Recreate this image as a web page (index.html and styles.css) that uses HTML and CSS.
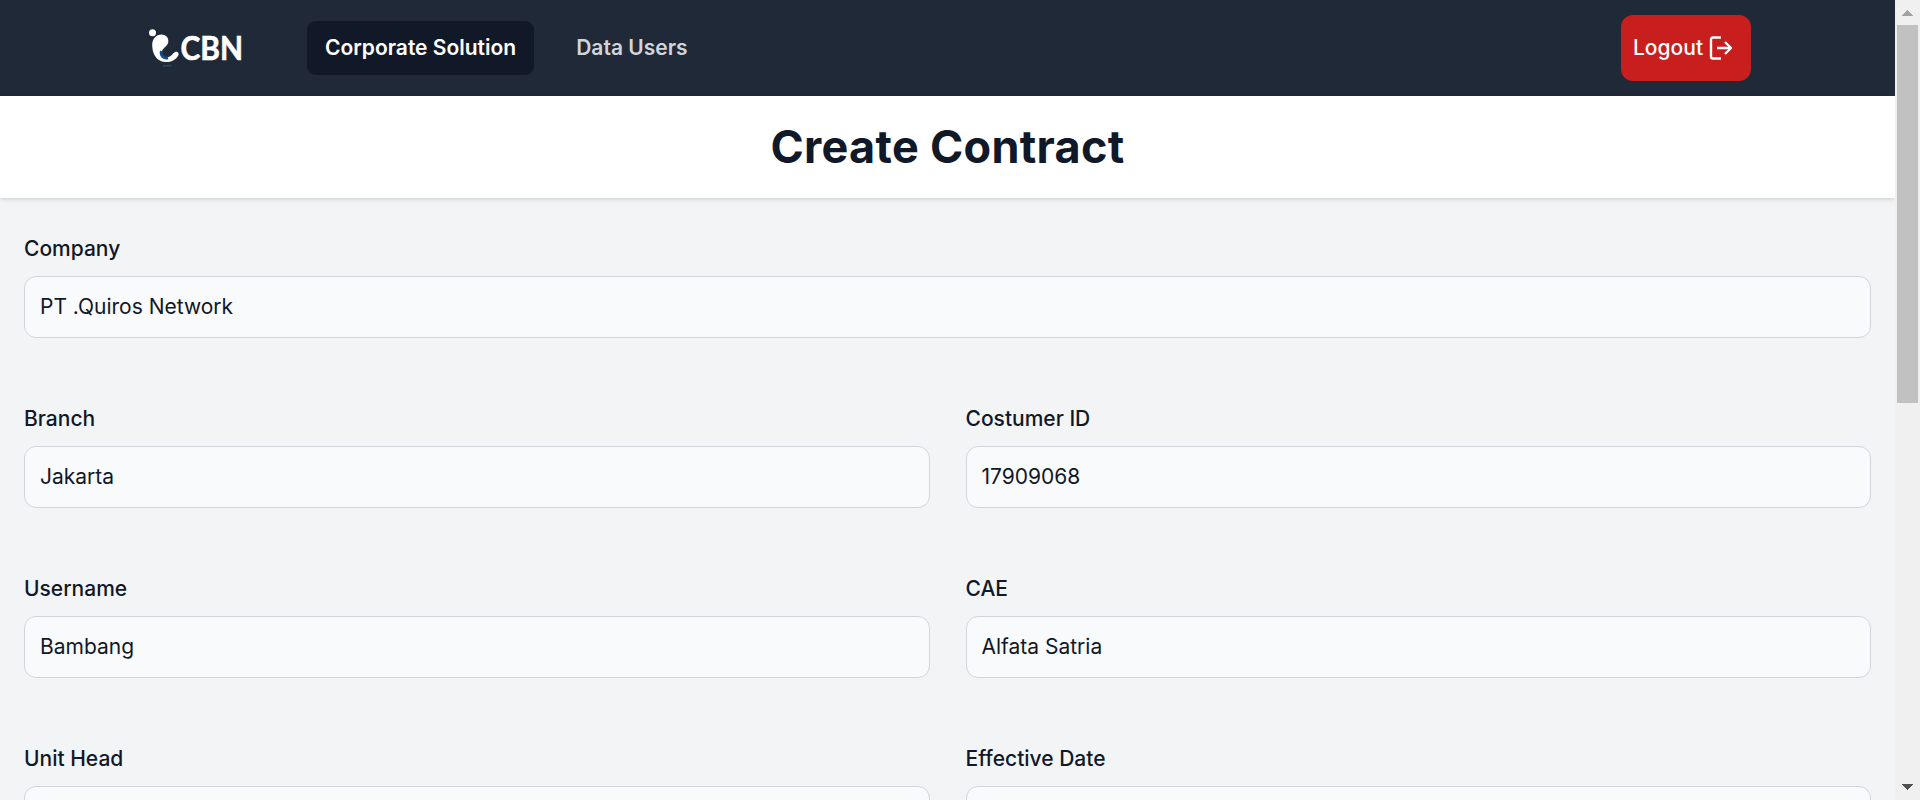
FILE: index.html
```html
<!DOCTYPE html>
<html lang="en">
<head>
<meta charset="utf-8">
<title>Create Contract</title>
<link rel="stylesheet" href="styles.css">
</head>
<body>
<div class="page">
  <nav class="navbar">
    <svg class="logo" viewBox="0 0 98 42" width="98" height="42">
      <circle cx="5.500" cy="6.800" r="3.500" fill="#fff"/>
      <path d="M14.500 8.600C18.500 8.600 21.800 11.500 21.300 16C20.800 20 15.500 22 14.500 26.500C14 30 16.500 32 20.500 31.300C24.500 30.500 25.500 27.500 28 26C30.500 24.800 32.500 27 31.300 29.500C28.500 34.500 23 36.500 18 36C9.500 35.300 5.200 28 5.200 19C5.200 13 9 8.600 14.500 8.600Z" fill="#fff"/>
      <path d="M14.300 25C13.300 30 17 32.800 21 31.800" fill="none" stroke="#174a83" stroke-width="2.800"/>
      <path d="M16 39.800H24.500" stroke="#2c4968" stroke-width="1.500"/>
      <text class="logo-text" x="33.500" y="33.500" textLength="62.500" lengthAdjust="spacingAndGlyphs">CBN</text>
    </svg>
    <div class="links">
      <a class="link active">Corporate Solution</a>
      <a class="link">Data Users</a>
    </div>
    <button class="logout">
      <span>Logout</span>
      <svg width="24" height="26" viewBox="0 0 24 26" fill="none" stroke="#fff" stroke-width="2.400" stroke-linejoin="round">
        <path d="M12 2.500H4Q2 2.500 2 4.500V21.500Q2 23.500 4 23.500H12"/>
        <path d="M8 13H22.500M16 7L22 13L16 19"/>
      </svg>
    </button>
  </nav>
  <header class="header"><h1>Create Contract</h1></header>
  <form class="form">
    <div class="field wide"><label>Company</label><input value="PT .Quiros Network"></div>
    <div class="field"><label>Branch</label><input value="Jakarta"></div>
    <div class="field"><label>Costumer ID</label><input value="17909068"></div>
    <div class="field"><label>Username</label><input value="Bambang"></div>
    <div class="field"><label>CAE</label><input value="Alfata Satria"></div>
    <div class="field"><label>Unit Head</label><input></div>
    <div class="field"><label>Effective Date</label><input></div>
  </form>
</div>
<div class="scrollbar">
  <svg class="arrow" width="25" height="25" viewBox="0 0 25 25" shape-rendering="crispEdges"><path d="M7 16L12.500 10L18 16Z" fill="#a3a3a3"/></svg>
  <div class="thumb"></div>
  <svg class="arrow" width="25" height="25" viewBox="0 0 25 25" shape-rendering="crispEdges"><path d="M7 9L12.500 15L18 9Z" fill="#505050"/></svg>
</div>
</body>
</html>
```
FILE: styles.css
```css
* { box-sizing: border-box; }
html { height: 100%; overflow: hidden; }
body {
  margin: 0;
  height: 800px;
  overflow: hidden;
  display: flex;
  font-family: Inter, "Liberation Sans", sans-serif;
  color: #111827;
  background: #f3f4f6;
}
.page { flex: 1; min-width: 0; height: 800px; overflow: hidden; }
.navbar {
  height: 96px;
  padding: 0 144px 0 147px;
  display: flex;
  align-items: center;
  background: #1f2937;
}
.logo { flex: none; margin-bottom: 3px; overflow: visible; }
.logo-text { font: 700 33px Lato, sans-serif; fill: #fff; stroke: #fff; stroke-width: .6px; }
.links { display: flex; gap: 24px; margin-left: 62px; flex: 1; }
.link {
  padding: 12px 18px;
  border-radius: 9px;
  font-size: 21px;
  line-height: 30px;
  font-weight: 600;
  color: #d1d5db;
}
.link.active { background: #111827; color: #fff; }
.logout {
  width: 130px;
  height: 66px;
  padding: 0 0 0 12px;
  border: 0;
  border-radius: 12px;
  background: #c81e1e;
  color: #fff;
  font: 500 21px/30px Inter, sans-serif;
  display: flex;
  align-items: center;
  gap: 6px;
}
.header {
  position: relative;
  height: 102px;
  padding: 24px;
  background: #fff;
  box-shadow: 0 1.5px 4.5px rgba(0,0,0,.1), 0 1.5px 3px -1.5px rgba(0,0,0,.1);
  text-align: center;
}
h1 { margin: 0; font-size: 45px; line-height: 54px; font-weight: 700; letter-spacing: .3px; }
.form {
  padding: 36px 24px;
  display: grid;
  grid-template-columns: 1fr 1fr;
  column-gap: 36px;
  row-gap: 66px;
}
.wide { grid-column: span 2; }
.field { display: flex; flex-direction: column; gap: 12px; min-width: 0; }
label { font-size: 21px; line-height: 30px; font-weight: 500; }
input {
  width: 100%;
  height: 62px;
  padding: 14px 15px 16px;
  border: 1px solid #d1d5db;
  border-radius: 12px;
  background: #f9fafb;
  color: #111827;
  font: 400 21px/30px Inter, sans-serif;
}
.scrollbar {
  width: 25px;
  height: 800px;
  background: #f0f0f0;
  display: flex;
  flex-direction: column;
  align-items: center;
}
.arrow { flex: none; display: block; }
.thumb { width: 21px; height: 378px; background: #c1c1c1; margin-bottom: auto; }
```
